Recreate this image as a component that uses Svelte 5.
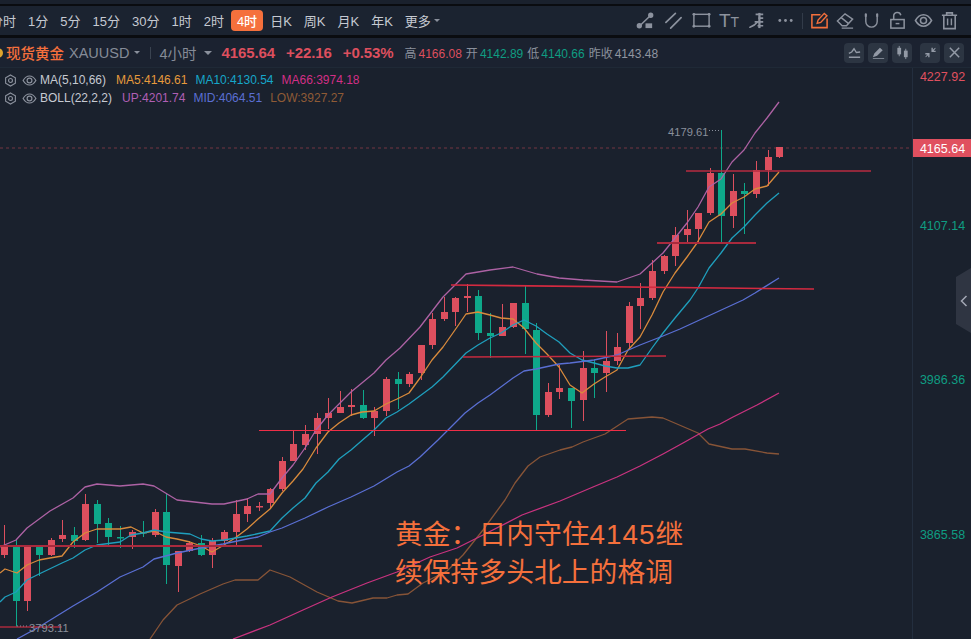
<script>
const periods = ['分时', '1分', '5分', '15分', '30分', '1时', '2时', '4时', '日K', '周K', '月K', '年K'];

// [high, bodyTop, bodyBottom, low, colour]
const candles = [
  [525,545,555,558,'r'],[540,545,601,627,'g'],[547,547,601,611,'r'],[547,547,555,576,'g'],
  [538,540,555,556,'r'],[520,535,539,542,'r'],[527,535,541,548,'g'],[494,504,540,541,'r'],
  [500,504,524,543,'g'],[518,523,537,546,'g'],[526,537,538,548,'g'],[530,532,537,549,'r'],
  [521,532,533,537,'g'],[509,512,535,537,'r'],[493,512,565,584,'g'],[551,551,566,592,'r'],
  [541,543,551,552,'r'],[535,543,555,556,'g'],[538,541,555,568,'r'],[530,532,541,544,'r'],
  [500,514,532,546,'r'],[498,506,514,522,'r'],[502,506,507,511,'r'],[488,489,503,508,'r'],
  [457,461,489,491,'r'],[431,444,461,461,'r'],[425,434,445,450,'r'],[413,418,434,454,'r'],
  [398,413,418,429,'r'],[391,407,413,413,'r'],[389,405,407,416,'r'],[390,405,418,419,'g'],
  [407,411,418,436,'r'],[377,379,411,416,'r'],[372,379,384,409,'g'],[372,374,384,387,'r'],
  [345,345,373,380,'r'],[313,319,345,349,'r'],[297,312,319,321,'r'],[297,298,312,326,'r'],
  [284,296,298,312,'r'],[290,296,333,340,'g'],[313,333,336,358,'g'],[304,327,336,336,'r'],
  [303,303,327,328,'r'],[286,303,329,354,'g'],[323,330,415,431,'g'],[383,392,415,417,'r'],
  [365,388,392,399,'r'],[388,388,401,428,'g'],[351,368,400,421,'r'],[360,368,373,398,'g'],
  [331,361,373,392,'r'],[333,347,361,365,'r'],[302,306,343,349,'r'],[283,298,306,329,'r'],
  [260,271,298,300,'r'],[255,256,271,274,'r'],[227,235,256,266,'r'],[210,229,235,242,'r'],
  [213,213,229,243,'r'],[168,173,213,215,'r'],[130,173,216,243,'g'],[174,191,216,228,'r'],
  [183,191,194,234,'g'],[161,170,194,198,'r'],[150,157,170,186,'r'],[147,147,157,158,'r']
];
const candleX = (i) => Math.round(4.3 + 11.565 * i);

const lines = [
  { color: '#ad62a4', pts: '0,547 16,540 27,528 50,511 73,498 85,487 97,484 120,486 143,484 154,486 177,500 212,504 224,504 247,499 258,494 270,494 282,478 293,465 305,448 316,430 328,415 340,403 351,392 374,373 386,360 400,348 420,327 443,297 466,274 490,270 513,267 537,274 559,278 583,280 617,282 640,274 663,253 687,223 698,207 709,187 721,179 732,162 744,150 755,133 767,118 779,102' },
  { color: '#d98b3c', pts: '0,573 5,569 17,573 27,565 39,560 50,558 62,556 73,542 85,533 97,529 120,529 131,527 143,533 154,531 166,537 177,539 190,542 201,546 212,552 224,545 235,538 247,529 258,519 270,509 282,493 293,481 303,469 316,448 328,432 339,423 351,415 362,412 374,411 386,404 397,399 409,393 420,378 432,360 443,347 455,330 466,314 478,312 490,315 501,318 513,319 524,328 536,343 547,354 559,367 570,385 582,393 594,384 605,377 617,370 628,350 640,337 652,315 663,292 675,273 687,257 697,243 709,222 721,214 732,203 744,197 755,189 767,186 779,172' },
  { color: '#1f9fbd', pts: '0,602 5,597 16,592 27,580 39,574 62,563 73,558 85,550 97,545 120,542 131,535 143,533 154,530 166,532 190,534 201,539 212,541 224,540 247,536 270,531 282,518 293,508 305,498 316,483 328,472 339,459 351,450 374,430 386,418 397,412 409,404 432,387 443,377 466,353 478,345 490,338 501,333 513,325 524,320 536,326 547,334 559,342 570,353 582,360 594,363 605,366 617,368 628,368 640,365 652,348 663,333 675,318 690,300 698,288 709,268 721,253 732,238 744,227 755,215 767,203 779,193' },
  { color: '#5a6fd3', pts: '17,639 39,627 73,606 97,592 120,577 143,567 154,559 177,553 201,548 223,544 247,539 258,537 270,532 282,528 305,518 328,507 351,497 374,486 397,472 409,466 420,457 438,440 465,413 478,403 490,395 513,378 524,371 536,369 559,364 570,363 594,360 617,355 640,345 663,336 680,329 743,300 755,293 779,278' },
  { color: '#875437', pts: '150,639 163,620 177,605 200,594 223,584 235,580 258,580 270,570 290,577 317,592 338,601 352,603 373,598 387,598 397,595 408,594 423,583 447,571 463,555 483,530 505,500 515,483 528,466 540,457 560,450 572,447 583,442 605,434 628,419 652,417 663,418 698,433 709,444 732,449 745,449 767,453 779,454' },
  { color: '#c9337f', pts: '233,639 270,625 303,610 332,597 367,583 397,572 430,557 457,548 483,535 522,515 560,501 593,487 617,477 640,466 663,454 683,443 708,429 720,424 733,417 757,405 779,393' }
];

// x1, y1, x2, y2, colour, width
const trendLines = [
  [0, 546, 262, 546, '#a92a3d', 2], [259, 430.5, 626, 430.5, '#ee2e47', 1.2], [451, 285, 814, 289, '#d42a40', 1.6],
  [463, 357, 666, 356, '#c42a3e', 1.6], [657, 243, 756, 243, '#a92a3d', 1.8], [686, 171, 871, 171, '#b82b40', 1.6],
  [0, 627, 62, 627, '#a92a3d', 1.6]
];

const axisLabels = [
  [76, '4227.92', '#e0505f'], [225, '4107.14', '#0f9d82'], [379, '3986.36', '#0f9d82'], [534, '3865.58', '#0f9d82']
];
</script>

{#snippet eye(size)}
  <svg width={size} height={size} viewBox="0 0 20 20" fill="none" stroke="currentColor" stroke-width="1.6">
    <path d="M1.5 10c2.3-4 5.2-6 8.500-6s6.200 2 8.500 6c-2.300 4-5.200 6-8.500 6s-6.200-2-8.500-6z"/>
    <circle cx="10" cy="10" r="3.200"/>
  </svg>
{/snippet}

{#snippet hexagon()}
  <svg width="13" height="13" viewBox="0 0 20 20" fill="none" stroke="currentColor" stroke-width="1.700">
    <path d="M10 1.500l7.500 4.300v8.400L10 18.500l-7.500-4.300V5.800z"/>
    <circle cx="10" cy="10" r="3"/>
  </svg>
{/snippet}

<div class="page">
  <div class="strip"></div>

  <header class="toolbar">
    <nav class="periods">
      {#each periods as p}
        <button class:active={p === '4时'}>{p}</button>
      {/each}
      <button class="more">更多<i class="caret small"></i></button>
    </nav>

    <div class="tools">
      <div class="draw">
        <span class="tool">
          <svg viewBox="0 0 20 20" fill="none" stroke="currentColor" stroke-width="1.600">
            <path d="M4 15.500L15 5"/><circle cx="15.500" cy="4.500" r="2" fill="currentColor"/><circle cx="3.500" cy="15.500" r="2" fill="currentColor"/>
            <rect x="10" y="13" width="7" height="5" fill="currentColor" stroke="none"/>
          </svg>
        </span>
        <span class="tool">
          <svg viewBox="0 0 20 20" fill="none" stroke="currentColor" stroke-width="1.800" stroke-linecap="round">
            <path d="M2 12L12 2.500M7 18L18 7"/>
          </svg>
        </span>
        <span class="tool">
          <svg viewBox="0 0 20 20" fill="none" stroke="currentColor" stroke-width="1.500">
            <rect x="2" y="3.500" width="16" height="12.500"/>
            <g fill="currentColor" stroke="none"><circle cx="2" cy="16" r="1.500"/><circle cx="18" cy="16" r="1.500"/><circle cx="18" cy="3.500" r="1.500"/><circle cx="2" cy="3.500" r="1.500"/></g>
          </svg>
        </span>
        <span class="tool tt"><b>T</b><small>T</small></span>
        <span class="tool">
          <svg viewBox="0 0 20 20" fill="none" stroke="currentColor" stroke-width="1.700">
            <path d="M2 17c3-1 6-3 8-5.500" stroke-linecap="round"/>
            <path d="M8 3.500h8M11 7.500h5M7 11.500h9M10 15.500h6"/>
            <path d="M12 2v16" stroke-width="2.400"/>
          </svg>
        </span>
        <span class="tool">
          <svg viewBox="0 0 20 20" fill="currentColor"><circle cx="4" cy="10" r="1.500"/><circle cx="10" cy="10" r="1.500"/><circle cx="16" cy="10" r="1.500"/></svg>
        </span>
      </div>
      <i class="sep"></i>
      <div class="state">
        <span class="tool orange">
          <svg viewBox="0 0 20 20" fill="none" stroke="currentColor" stroke-width="1.500">
            <path d="M11 4H2v13.500h16V8" stroke-width="1.600"/>
            <path d="M7.500 13l1-3.500 6.500-7 2.800 2.500-6.500 7z"/>
          </svg>
        </span>
        <span class="tool">
          <svg viewBox="0 0 20 20" fill="none" stroke="currentColor" stroke-width="1.500">
            <path d="M1.500 10.500L9.500 3l8 5.500-6.500 7H6.500z"/><path d="M5.500 7l7.500 6M6 18h12"/>
          </svg>
        </span>
        <span class="tool">
          <svg viewBox="0 0 20 20" fill="none" stroke="currentColor" stroke-width="1.500" stroke-linecap="round">
            <path d="M4 3v8a6 6 0 0 0 12 0V3"/><path d="M4 6V3M16 6V3" stroke-width="2.200" stroke-linecap="butt"/>
          </svg>
        </span>
        <span class="tool">
          <svg viewBox="0 0 20 20" fill="none" stroke="currentColor" stroke-width="1.600">
            <rect x="3" y="9" width="14" height="9"/><path d="M6 9V5.500a3.800 3.800 0 0 1 7.500-1"/>
            <rect x="8" y="12.500" width="4" height="1.500" fill="currentColor" stroke="none"/>
          </svg>
        </span>
        <span class="tool">{@render eye(20)}</span>
        <span class="tool">
          <svg viewBox="0 0 20 20" fill="none" stroke="currentColor" stroke-width="1.700">
            <path d="M2 4.500h16M7 4.500V2h6v2.500M4 4.500v14h12v-14"/><path d="M8 8v7M12 8v7" stroke-width="1.500"/>
          </svg>
        </span>
      </div>
    </div>
  </header>

  <section class="info">
    <i class="coin"></i>
    <span class="name">现货黄金</span>
    <span class="code">XAUUSD</span><i class="caret small"></i>
    <i class="divider"></i>
    <span class="code period">4小时</span><i class="caret"></i>
    <span class="quote price">4165.64</span>
    <span class="quote">+22.16</span>
    <span class="quote">+0.53%</span>
    <span class="stat"><em>高</em><b class="up">4166.08</b></span>
    <span class="stat"><em>开</em><b class="down">4142.89</b></span>
    <span class="stat"><em>低</em><b class="down">4140.66</b></span>
    <span class="stat"><em>昨收</em><b>4143.48</b></span>
    <div class="actions">
      <button aria-label="指标">
        <svg viewBox="0 0 16 16" fill="none" stroke="currentColor" stroke-width="1.500"><path d="M2 9l3-1.500L7.500 4l2.500 4 4-.5M2 13h12"/></svg>
      </button>
      <button aria-label="画线">
        <svg viewBox="0 0 16 16" fill="currentColor"><path d="M2 13l1.500-4 6-6 3 2.500-6 6zM2 14h12v1H2z"/></svg>
      </button>
      <button aria-label="K线">
        <svg viewBox="0 0 16 16" fill="currentColor"><rect x="2.500" y="3" width="4" height="7"/><rect x="4" y="1" width="1" height="11"/><rect x="9.500" y="6" width="4" height="7"/><rect x="11" y="4" width="1" height="11"/></svg>
      </button>
      <button class="gap" aria-label="收起">
        <svg viewBox="0 0 16 16" fill="currentColor"><path d="M9 3h1.500v2L13 3l.5.500-2 2.500h2v1.500H9zM7 13H5.500v-2L3 13l-.5-.500 2-2.500h-2V8.500H7z"/></svg>
      </button>
      <button aria-label="关闭">
        <svg viewBox="0 0 16 16" fill="none" stroke="currentColor" stroke-width="1.600"><path d="M3 3l10 10M13 3L3 13"/></svg>
      </button>
    </div>
  </section>

  <main class="chart">
    <svg class="plot" width="971" height="571" viewBox="0 68 971 571">
      <line x1="912.500" y1="68" x2="912.500" y2="639" stroke="#232e3e"/>
      <line x1="0" y1="148" x2="912" y2="148" stroke="#e0505f" stroke-opacity="0.450" stroke-dasharray="3 3"/>

      {#each candles as [high, top, bottom, low, c], i}
        <rect class={c} x={candleX(i)} y={high} width="1" height={low - high}/>
        <rect class={c} x={candleX(i) - 3} y={top} width="7" height={Math.max(bottom - top, 1.5)}/>
      {/each}

      {#each lines as l}
        <polyline points={l.pts} fill="none" stroke={l.color} stroke-width="1.300" stroke-linejoin="round"/>
      {/each}
      {#each trendLines as [x1, y1, x2, y2, color, width]}
        <line {x1} {y1} {x2} {y2} stroke={color} stroke-width={width}/>
      {/each}

      <line x1="709" y1="130.500" x2="721" y2="130.500" stroke="#8a909c" stroke-dasharray="1 2"/>
      <line x1="17" y1="626" x2="28" y2="626" stroke="#8a909c" stroke-dasharray="1 2"/>
      <text class="extreme" x="668" y="136">4179.61</text>
      <text class="extreme" x="29" y="632">3793.11</text>

      {#each axisLabels as [y, text, color]}
        <text class="axis" x="942.500" y={y + 4.500} fill={color}>{text}</text>
      {/each}

      <rect x="913" y="139" width="58" height="18" fill="#e0505f"/>
      <text class="axis" x="942.500" y="152.500" fill="#fff">4165.64</text>

      <polygon points="956,277 971,268 971,333 956,324" fill="#2f3542"/>
      <path d="M966.500 296l-5 5 5 5" fill="none" stroke="#a3a8b4" stroke-width="1.500"/>
    </svg>

    <div class="legend">
      <div>
        {@render hexagon()}<span class="eye">{@render eye(15)}</span>
        <span class="label">MA(5,10,66)</span>
        <span style:color="#e69a3c">MA5:4146.61</span>
        <span style:color="#16a6c9">MA10:4130.54</span>
        <span style:color="#d22f86">MA66:3974.18</span>
      </div>
      <div>
        {@render hexagon()}<span class="eye">{@render eye(15)}</span>
        <span class="label">BOLL(22,2,2)</span>
        <span style:color="#b05fb5">UP:4201.74</span>
        <span style:color="#5a6fd3">MID:4064.51</span>
        <span style:color="#8f5b36">LOW:3927.27</span>
      </div>
    </div>

    <p class="headline">黄金：日内守住<span class="digits">4145</span>继<br>续保持多头北上的格调</p>
  </main>
</div>

<style>
:global(body) {
  background: #1a212d;
}

.page {
  width: 971px;
  height: 639px;
  overflow: hidden;
  background: #0a0c10;
  color: #c6cad2;
  font-family: "Liberation Sans", "Noto Sans CJK SC", sans-serif;
  font-size: 12px;
}

.strip {
  height: 4px;
  background: #1a212d;
  margin-bottom: 2px;
}

button {
  font: inherit;
  color: inherit;
  background: none;
  border: 0;
  padding: 0;
}

.toolbar {
  height: 29px;
  margin-bottom: 3px;
  background: #1b2330;
  display: flex;
  align-items: center;
  justify-content: space-between;
}

.periods {
  display: flex;
  align-items: center;
  margin-left: -16px;
  font-size: 13px;
}

.periods button {
  height: 21px;
  padding: 0 6px;
  border-radius: 4px;
  white-space: nowrap;
}

.periods .active {
  background: #f5703c;
  color: #fff;
  margin: 0 1px;
  font-weight: 500;
}

.more {
  display: flex;
  align-items: center;
  gap: 3px;
}

.caret {
  display: inline-block;
  border: 4px solid transparent;
  border-top: 4px solid #8a909c;
  border-bottom: 0;
}

.caret.small {
  border-width: 3px 3px 0;
}

.tools {
  display: flex;
  align-items: center;
  padding-right: 9px;
}

.draw,
.state {
  display: flex;
}

.tool {
  width: 28px;
  height: 22px;
  display: flex;
  align-items: center;
  justify-content: center;
  color: #8c929e;
}

.state .tool {
  width: 26px;
}

.tool svg {
  width: 19px;
  height: 19px;
}

.tool.orange {
  color: #f5703c;
}

.tt {
  font-family: "Liberation Sans", sans-serif;
  align-items: baseline;
  line-height: 22px;
}

.tt b {
  font-weight: 400;
  font-size: 19px;
}

.tt small {
  font-size: 14px;
}

.sep {
  width: 1px;
  height: 16px;
  margin: 0 3px;
  background: #323b49;
}

.info {
  height: 30px;
  background: #1b2230;
  border-bottom: 1px solid #1f2936;
  box-sizing: border-box;
  display: flex;
  align-items: center;
  color: #8a909c;
  font-size: 14px;
  white-space: nowrap;
}

.coin {
  width: 5px;
  height: 10px;
  margin-left: -2px;
  margin-right: 3px;
  border-radius: 0 5px 5px 0;
  background: #e0a52d;
}

.name {
  color: #f5703c;
  font-weight: 500;
  font-size: 14.500px;
  margin-right: 5px;
}

.code {
  color: #858b97;
  font-size: 14.500px;
  margin-right: 5px;
}

.divider {
  width: 1px;
  height: 12px;
  background: #3a4350;
  margin: 0 8px 0 10px;
}

.period {
  margin-right: 7px;
}

.info > .caret {
  margin-right: 10px;
}

.info > .caret.small {
  margin-right: 0;
}

.quote {
  color: #dd4f5e;
  font-size: 15px;
  font-weight: 700;
  margin-right: 11px;
}

.quote:nth-of-type(n) {
  letter-spacing: -0.1px;
}

.stat {
  margin-right: 4px;
  font-size: 12px;
}

.stat em {
  font-style: normal;
  margin-right: 2px;
}

.stat b {
  font-weight: 400;
  color: #8f95a0;
}

.stat .up {
  color: #dd4f5e;
}

.stat .down {
  color: #0f9d82;
}

.actions {
  margin-left: auto;
  margin-right: 7px;
  display: flex;
  gap: 4px;
}

.actions button {
  width: 20px;
  height: 20px;
  border-radius: 4px;
  background: #2c3542;
  color: #939aa6;
  display: flex;
  align-items: center;
  justify-content: center;
}

.actions svg {
  width: 15px;
  height: 15px;
}

.actions .gap {
  margin-left: 4px;
}

.chart {
  position: relative;
  height: 571px;
  background: #1a212d;
}

.plot {
  display: block;
}

.r {
  fill: #dd4f5e;
}

.g {
  fill: #0ea88a;
}

.extreme {
  fill: #8a909c;
  font-size: 11.200px;
}

.axis {
  font-size: 12.500px;
  text-anchor: middle;
}

.legend {
  position: absolute;
  left: 4px;
  top: 3px;
  display: flex;
  flex-direction: column;
}

.legend div {
  height: 18px;
  display: flex;
  align-items: center;
  gap: 8px;
  color: #8c929e;
  white-space: nowrap;
}

.eye {
  display: flex;
  margin: 0 -5px 0 -3px;
}

.label {
  color: #c6cad2;
  margin-right: 2px;
}

.headline {
  position: absolute;
  left: 395px;
  top: 448px;
  margin: 0;
  color: #f5703c;
  font-size: 27.800px;
  line-height: 38px;
  white-space: nowrap;
}

.digits {
  letter-spacing: 1px;
}
</style>
